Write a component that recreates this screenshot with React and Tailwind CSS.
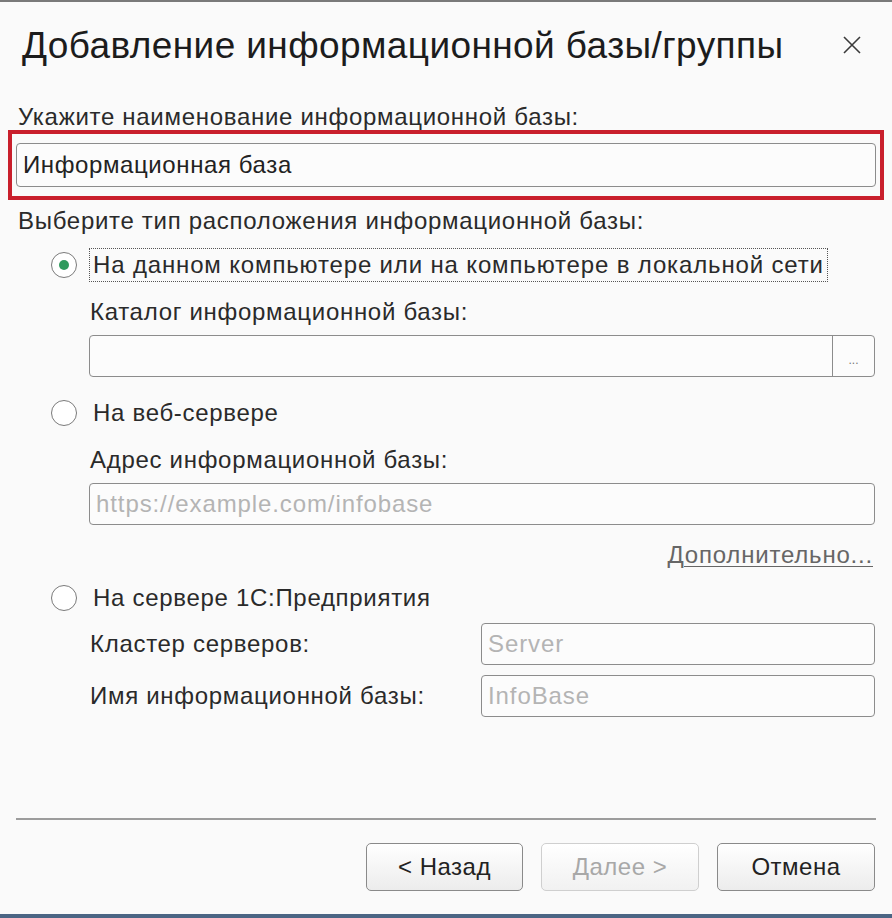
import React from 'react'

const Radio = ({ checked }) => (
  <div className="w-[26px] h-[26px] rounded-full border border-[#7a7a7a] bg-white flex items-center justify-center shrink-0">
    {checked && <div className="w-[10px] h-[10px] rounded-full bg-[#2f9a5d]"></div>}
  </div>
)

const Field = ({ placeholder, value, className = '' }) => (
  <div className={`h-[42px] rounded-[4px] border border-[#8c8c8c] bg-[#fcfcfc] flex items-center px-[6px] text-[24px] tracking-[0.9px] ${className}`}>
    {value ? (
      <span className="text-[#222]">{value}</span>
    ) : (
      <span className="text-[#b4b4b4]">{placeholder}</span>
    )}
  </div>
)

const App = () => {
  return (
    <div
      className="w-[892px] h-[918px] bg-[#fafafa] flex flex-col text-[#2a2a2a] overflow-hidden"
      style={{ fontFamily: '"Liberation Sans", Arial, sans-serif' }}
    >
      {/* top edge */}
      <div className="h-[2px] bg-[#7a7a7a]"></div>

      {/* header */}
      <div className="h-[86px] flex items-center justify-between pl-[22px] pr-[31px]">
        <h1 className="text-[37px] tracking-[0.4px] text-[#1c1c1c] leading-none">Добавление информационной базы/группы</h1>
        <svg width="18" height="18" viewBox="0 0 18 18" className="shrink-0">
          <path d="M1 1L17 17M17 1L1 17" stroke="#3a3a3a" strokeWidth="1.6" />
        </svg>
      </div>

      {/* name */}
      <div className="mt-[16px] h-[26px] flex items-center pl-[18px] text-[24px] tracking-[0.7px]">Укажите наименование информационной базы:</div>
      <div className="ml-[8px] w-[876px] border-4 border-[#c91f2c] px-[4px] py-[9px]">
        <div className="h-[44px] rounded-[4px] border border-[#8c8c8c] bg-[#fcfcfc] flex items-center px-[6px] text-[24px] tracking-[0.6px] text-[#222]">
          Информационная база
        </div>
      </div>

      {/* location type */}
      <div className="mt-[8px] h-[26px] flex items-center pl-[18px] text-[24px] tracking-[0.7px]">Выберите тип расположения информационной базы:</div>

      <div className="mt-[14px] h-[34px] flex items-center pl-[51px]">
        <Radio checked />
        <div className="ml-[12px] h-[34px] flex items-center px-[3px] border border-dotted border-[#555] text-[24px] tracking-[0.85px]">
          На данном компьютере или на компьютере в локальной сети
        </div>
      </div>
      <div className="mt-[16px] h-[28px] flex items-center pl-[90px] text-[24px] tracking-[0.7px]">Каталог информационной базы:</div>
      <div className="mt-[9px] ml-[89px] w-[786px] h-[42px] rounded-[4px] border border-[#8c8c8c] bg-[#fcfcfc] flex">
        <div className="flex-1"></div>
        <div className="w-[42px] border-l border-[#8c8c8c] flex items-end justify-center pb-[10px] text-[12px] text-[#777] leading-none">...</div>
      </div>

      <div className="mt-[21px] h-[30px] flex items-center pl-[51px]">
        <Radio />
        <span className="ml-[16px] text-[24px] tracking-[0.7px]">На веб-сервере</span>
      </div>
      <div className="mt-[18px] h-[28px] flex items-center pl-[90px] text-[24px] tracking-[0.7px]">Адрес информационной базы:</div>
      <Field placeholder="https://example.com/infobase" className="mt-[9px] ml-[89px] w-[786px]" />
      <div className="mt-[16px] h-[28px] flex items-center justify-end pr-[19px]">
        <span className="text-[24px] tracking-[0.8px] text-[#666] underline underline-offset-[3px] decoration-1">Дополнительно...</span>
      </div>

      <div className="mt-[14px] h-[30px] flex items-center pl-[51px]">
        <Radio />
        <span className="ml-[16px] text-[24px] tracking-[0.7px]">На сервере 1С:Предприятия</span>
      </div>
      <div className="mt-[10px] flex items-center pl-[90px]">
        <span className="w-[391px] text-[24px] tracking-[0.7px]">Кластер серверов:</span>
        <Field placeholder="Server" className="w-[394px]" />
      </div>
      <div className="mt-[10px] flex items-center pl-[90px]">
        <span className="w-[391px] text-[24px] tracking-[0.7px]">Имя информационной базы:</span>
        <Field placeholder="InfoBase" className="w-[394px]" />
      </div>

      {/* footer */}
      <div className="mt-[101px] mx-[16px] h-[2px] bg-[#9c9c9c]"></div>
      <div className="mt-[23px] flex justify-end gap-[18px] pr-[17px]">
        <button className="w-[157px] h-[48px] rounded-[5px] border border-[#8a8a8a] bg-gradient-to-b from-white to-[#ececec] text-[24px] tracking-[0.5px] text-[#222]">
          &lt; Назад
        </button>
        <button className="w-[158px] h-[48px] rounded-[5px] border border-[#cfcfcf] bg-gradient-to-b from-white to-[#f1f1f1] text-[24px] tracking-[0.5px] text-[#a8a8a8]">
          Далее &gt;
        </button>
        <button className="w-[158px] h-[48px] rounded-[5px] border border-[#8a8a8a] bg-gradient-to-b from-white to-[#ececec] text-[24px] tracking-[0.5px] text-[#222]">
          Отмена
        </button>
      </div>
      <div className="mt-auto h-[4px] bg-[#4b6584]"></div>
    </div>
  )
}

export default App
